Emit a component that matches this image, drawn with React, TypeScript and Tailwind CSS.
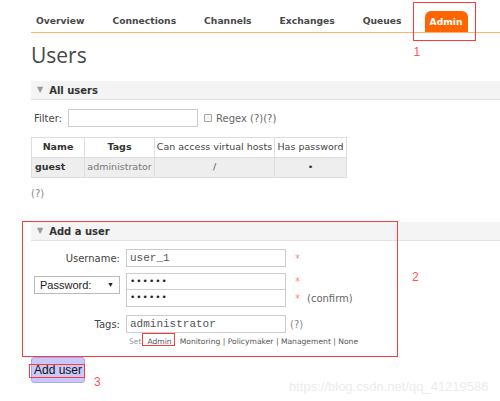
import React from "react";

const tabs = ["Overview", "Connections", "Channels", "Exchanges", "Queues"];

function SectionBar({ title }: { title: string }) {
  return (
    <div className="flex h-[19px] items-center gap-[6px] border-b border-[#e2e2e2] bg-[#f4f4f4] pl-[6px]">
      <span className="text-[8px] leading-none text-[#999]">▼</span>
      <span className="text-[10px] font-bold text-[#333]">{title}</span>
    </div>
  );
}

function RedBox({ className }: { className: string }) {
  return <div className={"pointer-events-none absolute border-[1.5px] border-[#ff3a3a] " + className} />;
}

export default function App() {
  return (
    <div className="relative h-[401px] w-[500px] overflow-hidden bg-white font-['DejaVu_Sans',sans-serif] text-[10px] text-[#444]">
      {/* top nav */}
      <div className="ml-[31px] flex h-[33px] items-end border-b border-[#fcb56f] pl-[5px]">
        {tabs.map((t) => (
          <span key={t} className="mr-[28px] pb-[4px] text-[9.2px] font-bold text-[#484848]">
            {t}
          </span>
        ))}
        <span className="relative ml-[-5px] flex h-[21px] items-center rounded-t-[6px] bg-[#ff6600] px-[5px] text-[9.2px] font-bold text-white">
          Admin
          <RedBox className="left-[-12px] top-[-9px] h-[39px] w-[63px]" />
          <span className="absolute left-[-11px] top-[32px] font-['Liberation_Sans',sans-serif] text-[12px] font-normal text-[#f55]">1</span>
        </span>
      </div>

      <div className="ml-[31px]">
        <h1 className="mt-[9px] h-[39px] font-['Open_Sans',sans-serif] text-[21px] leading-[26px] text-[#484848]">Users</h1>

        <SectionBar title="All users" />

        <div className="mt-[9px] flex items-center pl-[3px]">
          <span className="w-[34px] text-[#444]">Filter:</span>
          <div className="h-[18px] w-[130px] border border-[#ccc] bg-white" />
          <span className="ml-[6px] h-[8px] w-[8px] rounded-[1px] border border-[#aaa] bg-[#f4f4f4]" />
          <span className="ml-[4px] text-[#666]">Regex (?)(?)</span>
        </div>

        <table className="mt-[10px] w-[316px] border-collapse whitespace-nowrap text-center text-[9.5px]">
          <thead>
            <tr className="h-[20px] bg-white">
              <th className="w-[53px] border border-[#ddd] font-bold text-[#333]">Name</th>
              <th className="w-[70px] border border-[#ddd] font-bold text-[#333]">Tags</th>
              <th className="w-[120px] border border-[#ddd] font-normal text-[#444]">Can access virtual hosts</th>
              <th className="border border-[#ddd] font-normal text-[#444]">Has password</th>
            </tr>
          </thead>
          <tbody>
            <tr className="h-[20px] bg-[#eeeeee]">
              <td className="border border-[#ddd] pl-[3px] text-left font-bold text-[#333]">guest</td>
              <td className="border border-[#ddd] text-[#777]">administrator</td>
              <td className="border border-[#ddd] text-[#555]">/</td>
              <td className="border border-[#ddd] text-[#333]">•</td>
            </tr>
          </tbody>
        </table>

        <div className="mt-[8px] text-[#888]">(?)</div>

        <div className="relative mt-[21px]">
          <RedBox className="left-[-9px] top-[-1px] h-[136px] w-[376px]" />
          <span className="absolute left-[381px] top-[46px] font-['Liberation_Sans',sans-serif] text-[12px] text-[#f55]">2</span>

          <SectionBar title="Add a user" />

          {/* form */}
          <div className="mt-[8px] flex flex-col">
            <div className="flex items-center">
              <span className="w-[95px] pr-[6px] text-right text-[#444]">Username:</span>
              <div className="flex h-[18px] w-[160px] items-center border border-[#ccc] pl-[3px] font-['Liberation_Mono',monospace] text-[11px] text-[#555]">
                user_1
              </div>
              <span className="ml-[9px] text-[#f88]">*</span>
            </div>

            <div className="mt-[6px] flex">
              <div className="mr-[6px] mt-[3px] ml-[3px] flex h-[18px] w-[86px] items-center justify-between border border-[#bbb] bg-white px-[5px] font-['Liberation_Sans',sans-serif] text-[11px] text-[#222]">
                <span>Password:</span>
                <span className="text-[7px]">▼</span>
              </div>
              <div className="flex flex-col">
                <div className="flex items-center">
                  <div className="flex h-[17px] w-[160px] items-center border border-[#ccc] pl-[3px] text-[9px] tracking-[1px] text-[#222]">
                    ••••••
                  </div>
                  <span className="ml-[9px] text-[#f88]">*</span>
                </div>
                <div className="flex items-center">
                  <div className="flex h-[17px] w-[160px] items-center border border-t-0 border-[#ccc] pl-[3px] text-[9px] tracking-[1px] text-[#222]">
                    ••••••
                  </div>
                  <span className="ml-[9px] text-[#f88]">*</span>
                  <span className="ml-[7px] text-[#666]">(confirm)</span>
                </div>
              </div>
            </div>

            <div className="mt-[8px] flex items-center">
              <span className="w-[95px] pr-[6px] text-right text-[#444]">Tags:</span>
              <div className="flex h-[18px] w-[160px] items-center border border-[#ccc] pl-[3px] font-['Liberation_Mono',monospace] text-[11px] text-[#555]">
                administrator
              </div>
              <span className="ml-[4px] text-[#888]">(?)</span>
            </div>

            <div className="mt-[3px] flex pl-[98px] text-[7.6px] text-[#555]">
              <span className="text-[#999]">Set</span>
              <span className="relative ml-[6px]">
                Admin
                <RedBox className="left-[-5px] top-[-3px] h-[13px] w-[33px]" />
              </span>
              <span className="ml-[8px]">Monitoring | Policymaker | Management | None</span>
            </div>
          </div>
        </div>

        <button className="relative mt-[10px] flex h-[26px] w-[54px] items-center justify-center rounded-[3px] border border-[#a8a8f0] bg-[#c8c8fa] font-['Liberation_Sans',sans-serif] text-[12px] text-[#111]">
          Add user
          <RedBox className="left-[-3px] top-[6px] h-[14px] w-[56px]" />
          <span className="absolute left-[62px] top-[15px] text-[12px] text-[#f55]">3</span>
        </button>
      </div>

      <span className="absolute left-[289px] top-[377px] font-['Liberation_Sans',sans-serif] text-[13px] text-[#ececec]">
        https://blog.csdn.net/qq_41219586
      </span>
    </div>
  );
}
